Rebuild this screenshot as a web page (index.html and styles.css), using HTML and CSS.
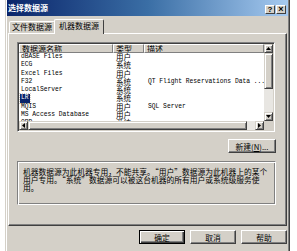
FILE: index.html
```html
<!DOCTYPE html>
<html lang="zh-CN">
<head>
<meta charset="utf-8">
<title>选择数据源</title>
<link rel="stylesheet" href="styles.css">
</head>
<body>
<div class="dialog">
  <div class="titlebar">
    <span class="title">选择数据源</span>
    <div class="tbtns">
      <span class="tbtn">?</span>
      <span class="tbtn close">×</span>
    </div>
  </div>
  <div class="body">
    <div class="tabs">
      <div class="tab">文件数据源</div>
      <div class="tab active">机器数据源</div>
    </div>
    <div class="panel">
      <div class="listview">
        <div class="lv-main">
          <div class="lv-header">
            <div class="hcol c1">数据源名称</div>
            <div class="hcol c2">类型</div>
            <div class="hcol c3">描述</div>
          </div>
          <div class="row"><span class="c1 lat">dBASE Files</span><span class="c2">用户</span><span class="c3"></span></div>
          <div class="row"><span class="c1 lat">ECG</span><span class="c2">系统</span><span class="c3"></span></div>
          <div class="row"><span class="c1 lat">Excel Files</span><span class="c2">用户</span><span class="c3"></span></div>
          <div class="row"><span class="c1 lat">F32</span><span class="c2">系统</span><span class="c3 lat">QT Flight Reservations Data ...</span></div>
          <div class="row"><span class="c1 lat">LocalServer</span><span class="c2">系统</span><span class="c3"></span></div>
          <div class="row"><span class="c1 lat"><span class="sel">LR</span></span><span class="c2">系统</span><span class="c3"></span></div>
          <div class="row"><span class="c1 lat">MQIS</span><span class="c2">用户</span><span class="c3 lat">SQL Server</span></div>
          <div class="row"><span class="c1 lat">MS Access Database</span><span class="c2">用户</span><span class="c3"></span></div>
          <div class="row"><span class="c1 lat">ORD</span><span class="c2">系统</span><span class="c3"></span></div>
        </div>
        <div class="vscroll">
          <span class="sbtn"><svg width="5" height="3" viewBox="0 0 5 3"><path d="M2.5 0 L5 3 L0 3 Z" fill="#000"/></svg></span>
          <span class="vthumb"></span>
          <span class="vtrack"></span>
          <span class="sbtn"><svg width="5" height="3" viewBox="0 0 5 3"><path d="M0 0 L5 0 L2.5 3 Z" fill="#000"/></svg></span>
        </div>
        <div class="hscroll">
          <span class="sbtn"><svg width="3" height="5" viewBox="0 0 3 5"><path d="M3 0 L3 5 L0 2.5 Z" fill="#000"/></svg></span>
          <span class="hthumb"></span>
          <span class="htrack"></span>
          <span class="sbtn"><svg width="3" height="5" viewBox="0 0 3 5"><path d="M0 0 L0 5 L3 2.5 Z" fill="#000"/></svg></span>
        </div>
        <div class="corner"></div>
      </div>
      <div class="newrow"><span class="btn newbtn">新建(<u>N</u>)...</span></div>
      <div class="groupbox">
        <p>机器数据源为此机器专用，不能共享。“用户”数据源为此机器上的某个<br>用户专用。“系统”数据源可以被这台机器的所有用户或系统级服务使<br>用。</p>
      </div>
    </div>
    <div class="buttons">
      <span class="btn default">确定</span>
      <span class="btn">取消</span>
      <span class="btn">帮助</span>
    </div>
  </div>
</div>
</body>
</html>
```

FILE: styles.css
```css
* { box-sizing: border-box; }
html, body { margin: 0; padding: 0; background: #fff; }
body {
  width: 297px;
  height: 251px;
  overflow: hidden;
  font-family: "Noto Sans CJK SC", "Liberation Sans", sans-serif;
  font-size: 7.75px;
  color: #000;
}
.dialog {
  margin-left: 5px;
  width: 285px;
  height: 260px;
  background: #d4d0c8;
  border-left: 1px solid #d4d0c8;
  border-right: 1px solid #404040;
  box-shadow: inset 1px 0 0 #fff, inset -1px 0 0 #808080;
  padding: 0 1px;
}
.titlebar {
  height: 16px;
  background: linear-gradient(to right, #0a246a, #3a6ea5 50%, #a6caf0);
  display: flex;
  align-items: center;
  justify-content: space-between;
  padding: 0 2px 0 1px;
}
.title {
  color: #fff;
  font-weight: bold;
  font-size: 8px;
  line-height: 16px;
}
.tbtns { display: flex; gap: 1px; margin-top: 2px; }
.tbtn {
  width: 10px;
  height: 9px;
  background: #d4d0c8;
  border: 1px solid;
  border-color: #fff #404040 #404040 #fff;
  font: bold 8px/7px "Liberation Sans", sans-serif;
  text-align: center;
  color: #000;
}
.tbtn.close { font-size: 9px; line-height: 6px; }
.body { padding: 0 1px; }
.tabs {
  display: flex;
  align-items: flex-end;
  height: 18px;
  padding-left: 1px;
  position: relative;
  z-index: 1;
  margin-bottom: -1px;
}
.tab {
  height: 12px;
  padding: 0 2px;
  border: 1px solid;
  border-color: #fff #404040 transparent #fff;
  border-radius: 2px 2px 0 0;
  line-height: 10px;
  background: #d4d0c8;
  margin-bottom: 1px;
  width: 46px;
  text-align: center;
  font-size: 8px;
}
.tab.active {
  height: 15px;
  width: 50px;
  margin-bottom: 0;
  margin-left: -1px;
  border-bottom: none;
  padding-top: 1px;
}
.panel {
  height: 193px;
  border: 1px solid;
  border-color: #fff #404040 #404040 #fff;
  box-shadow: inset -1px -1px 0 #808080;
  padding: 8px 8px 0 8px;
}
.listview {
  width: 258px;
  height: 90px;
  border: 1px solid;
  border-color: #808080 #fff #fff #808080;
  box-shadow: inset 1px 1px 0 #404040, inset -1px -1px 0 #d4d0c8;
  padding: 1px;
  display: grid;
  grid-template-columns: 1fr 9px;
  grid-template-rows: 1fr 9px;
  background: #fff;
}
.lv-main { overflow: hidden; background: #fff; }
.lv-header { display: flex; height: 9px; }
.hcol {
  background: #d4d0c8;
  border: 1px solid;
  border-color: #fff #808080 #808080 #fff;
  box-shadow: 1px 0 0 #404040;
  line-height: 7px;
  padding-left: 2px;
  white-space: nowrap;
  overflow: hidden;
  font-size: 8px;
}
.c1 { width: 94px; flex: none; }
.c2 { width: 31px; flex: none; }
.c3 { flex: 1; }
.row { display: flex; height: 8.3px; line-height: 8.3px; white-space: nowrap; }
.row span { display: block; padding-left: 2px; }
.row .c2 { padding-left: 3px; font-size: 7.5px; }
.row .c3 { padding-left: 4px; }
.lat { font-family: "Liberation Mono", monospace; font-size: 6.3px; }
.row span.sel {
  display: inline-block;
  background: #0a246a;
  color: #fff;
  padding: 0 1px;
  margin-left: -1px;
  outline: 1px dotted #d4d0c8;
}
.vscroll {
  display: flex;
  flex-direction: column;
  background: #e8e6e2;
}
.hscroll {
  display: flex;
  background: #e8e6e2;
}
.corner { background: #d4d0c8; }
.sbtn {
  flex: none;
  width: 9px;
  height: 9px;
  background: #d4d0c8;
  border: 1px solid;
  border-color: #d4d0c8 #404040 #404040 #d4d0c8;
  box-shadow: inset 1px 1px 0 #fff, inset -1px -1px 0 #808080;
  display: flex;
  align-items: center;
  justify-content: center;
}
.vthumb, .hthumb {
  flex: none;
  background: #d4d0c8;
  border: 1px solid;
  border-color: #d4d0c8 #404040 #404040 #d4d0c8;
  box-shadow: inset 1px 1px 0 #fff, inset -1px -1px 0 #808080;
}
.vthumb { height: 36px; }
.hthumb { width: 219px; }
.vtrack, .htrack { flex: 1; }
.newrow {
  display: flex;
  justify-content: flex-end;
  margin-top: 7px;
  width: 259px;
}
.btn {
  display: flex;
  align-items: center;
  justify-content: center;
  height: 14px;
  background: #d4d0c8;
  border: 1px solid;
  border-color: #fff #404040 #404040 #fff;
  box-shadow: inset -1px -1px 0 #808080;
  white-space: nowrap;
  font-size: 7.75px;
}
.btn u { text-decoration: underline; }
.newbtn { width: 48px; }
.groupbox {
  margin-top: 8px;
  width: 259px;
  height: 44px;
  border: 1px solid;
  border-color: #808080 #fff #fff #808080;
  box-shadow: inset 1px 1px 0 #fff, inset -1px -1px 0 #808080;
  padding: 6px 3px 0 5px;
}
.groupbox p {
  margin: 0;
  line-height: 8px;
  font-size: 7.75px;
  white-space: nowrap;
}
.buttons {
  display: flex;
  justify-content: flex-end;
  gap: 5px;
  margin-top: 4px;
}
.buttons .btn { width: 46px; }
.btn.default {
  border: 1px solid #000;
  box-shadow: inset 1px 1px 0 #fff, inset -1px -1px 0 #404040, inset -2px -2px 0 #808080;
}
```
